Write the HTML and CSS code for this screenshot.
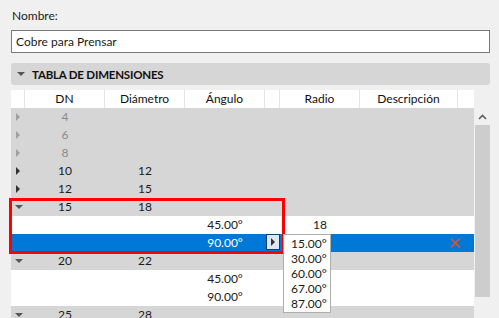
FILE: index.html
```html
<!DOCTYPE html>
<html lang="es">
  <head>
    <meta charset="UTF-8" />
    <meta name="viewport" content="width=device-width, initial-scale=1.0" />
    <title>Tabla de dimensiones</title>
    <link rel="stylesheet" href="styles.css">
  </head>
  <body>
    <div class="field-label">Nombre:</div>
    <input class="name-input" type="text" value="Cobre para Prensar" />

    <div class="section-head">
      <span class="tri-down"></span>
      <span>TABLA DE DIMENSIONES</span>
    </div>

    <div class="grid-row head-row">
      <div class="cell"></div>
      <div class="cell">DN</div>
      <div class="cell">Diámetro</div>
      <div class="cell">Ángulo</div>
      <div class="cell"></div>
      <div class="cell">Radio</div>
      <div class="cell">Descripción</div>
      <div class="cell last"></div>
    </div>

    <div class="table-body">
      <div class="rows">
        <div class="grid-row group muted">
          <div class="cell"><span class="tri-right"></span></div>
          <div class="cell">4</div>
        </div>
        <div class="grid-row group muted">
          <div class="cell"><span class="tri-right"></span></div>
          <div class="cell">6</div>
        </div>
        <div class="grid-row group muted">
          <div class="cell"><span class="tri-right"></span></div>
          <div class="cell">8</div>
        </div>
        <div class="grid-row group">
          <div class="cell"><span class="tri-right"></span></div>
          <div class="cell">10</div>
          <div class="cell">12</div>
        </div>
        <div class="grid-row group">
          <div class="cell"><span class="tri-right"></span></div>
          <div class="cell">12</div>
          <div class="cell">15</div>
        </div>
        <div class="grid-row group">
          <div class="cell"><span class="tri-open"></span></div>
          <div class="cell">15</div>
          <div class="cell">18</div>
        </div>
        <div class="grid-row child">
          <div class="cell"></div>
          <div class="cell"></div>
          <div class="cell"></div>
          <div class="cell">45.00°</div>
          <div class="cell"></div>
          <div class="cell">18</div>
        </div>
        <div class="grid-row child selected">
          <div class="cell"></div>
          <div class="cell"></div>
          <div class="cell"></div>
          <div class="cell">90.00°</div>
          <div class="cell"><span class="pick-btn"><span class="tri-right"></span></span></div>
          <div class="cell"></div>
          <div class="cell"></div>
          <div class="cell">
            <svg class="del-icon" width="11" height="10" viewBox="0 0 11 10">
              <path d="M1 0.5 L10 9.5 M10 0.5 L1 9.5" stroke="#e8502a" stroke-width="1.6" fill="none" />
            </svg>
          </div>
        </div>
        <div class="grid-row group">
          <div class="cell"><span class="tri-open"></span></div>
          <div class="cell">20</div>
          <div class="cell">22</div>
        </div>
        <div class="grid-row child">
          <div class="cell"></div>
          <div class="cell"></div>
          <div class="cell"></div>
          <div class="cell">45.00°</div>
        </div>
        <div class="grid-row child">
          <div class="cell"></div>
          <div class="cell"></div>
          <div class="cell"></div>
          <div class="cell">90.00°</div>
        </div>
        <div class="grid-row group">
          <div class="cell"><span class="tri-open"></span></div>
          <div class="cell">25</div>
          <div class="cell">28</div>
        </div>

        <div class="highlight-box"></div>

        <ul class="angle-menu">
          <li>15.00°</li>
          <li>30.00°</li>
          <li>60.00°</li>
          <li>67.00°</li>
          <li>87.00°</li>
        </ul>
      </div>

      <div class="scrollbar">
        <div class="scroll-up">
          <svg width="9" height="6" viewBox="0 0 9 6">
            <path d="M1 5 L4.5 1.5 L8 5" stroke="#5f5f5f" stroke-width="1.6" fill="none" />
          </svg>
        </div>
        <div class="scroll-thumb"></div>
      </div>
    </div>
  </body>
</html>
```

FILE: styles.css
```css
html, body {
  height: 318px;
  overflow: hidden;
}
body {
  margin: 0;
  padding: 8px 9px 0 11px;
  background-color: #f0f0f0;
  font-family: Lato, "Noto Sans", sans-serif;
  font-size: 12px;
  color: #1a1a1a;
}
.field-label {
  height: 15px;
  line-height: 15px;
  padding-left: 1px;
}
.name-input {
  display: block;
  box-sizing: border-box;
  width: 100%;
  height: 23px;
  margin-top: 7px;
  padding: 0 4px;
  border: 1px solid #7a7a7a;
  background: white;
  font: inherit;
  color: #1a1a1a;
  outline: none;
}
.section-head {
  display: flex;
  align-items: center;
  height: 22px;
  margin-top: 10px;
  background: #d6d6d6;
  border-radius: 3px;
  font-size: 11.5px;
  font-weight: bold;
  letter-spacing: -0.2px;
  color: #111;
}
.section-head .tri-down {
  margin: 0 7px 0 6px;
}
.tri-down,
.tri-open {
  display: inline-block;
  width: 0;
  height: 0;
  border-left: 4px solid transparent;
  border-right: 4px solid transparent;
  border-top: 4px solid #555;
}
.tri-right {
  display: inline-block;
  width: 0;
  height: 0;
  border-top: 4px solid transparent;
  border-bottom: 4px solid transparent;
  border-left: 4px solid #333;
}
.grid-row {
  display: grid;
  grid-template-columns: 14px 80px 80px 80px 15px 80px 98px 16px;
  height: 18px;
  line-height: 18px;
}
.cell {
  text-align: center;
  white-space: nowrap;
}
.head-row {
  width: 463px;
  margin-top: 5px;
  background: white;
  color: #111;
}
.head-row .cell {
  border-right: 1px solid #e4e4e4;
}
.head-row .cell.last {
  border-right: none;
}
.table-body {
  display: flex;
  align-items: flex-start;
}
.rows {
  position: relative;
  width: 463px;
}
.group {
  background: #d6d6d6;
}
.group .cell:first-child {
  display: flex;
  align-items: center;
  justify-content: center;
}
.group .tri-right {
  margin-left: -1px;
}
.group .tri-open {
  margin-left: 2px;
}
.muted {
  color: #8a8a8a;
}
.muted .tri-right {
  border-left-color: #a0a0a0;
}
.child {
  background: white;
}
.selected {
  background: #0078d7;
  color: white;
}
.selected .cell {
  display: flex;
  align-items: center;
  justify-content: center;
}
.pick-btn {
  box-sizing: border-box;
  display: flex;
  align-items: center;
  justify-content: center;
  width: 14px;
  height: 16px;
  margin-left: 1px;
  margin-top: -2px;
  background: #dbe7f3;
  border: 1px solid #1d3b5c;
}
.pick-btn .tri-right {
  border-left-color: #333;
}
.del-icon {
  display: block;
  margin-left: -22px;
}
.highlight-box {
  position: absolute;
  left: -2px;
  top: 90px;
  width: 276px;
  height: 56px;
  box-sizing: border-box;
  border: 3px solid #ff0000;
}
.angle-menu {
  position: absolute;
  left: 272px;
  top: 126px;
  width: 46px;
  margin: 0;
  padding: 1px 0;
  list-style: none;
  background: white;
  border: 1px solid #adadad;
  color: #1a1a1a;
}
.angle-menu li {
  height: 15px;
  line-height: 15px;
  padding-left: 7px;
}
.scrollbar {
  width: 15px;
  margin-left: 1px;
}
.scroll-up {
  display: flex;
  justify-content: center;
  align-items: center;
  height: 17px;
}
.scroll-thumb {
  height: 172px;
  background: #cdcdcd;
}
```
